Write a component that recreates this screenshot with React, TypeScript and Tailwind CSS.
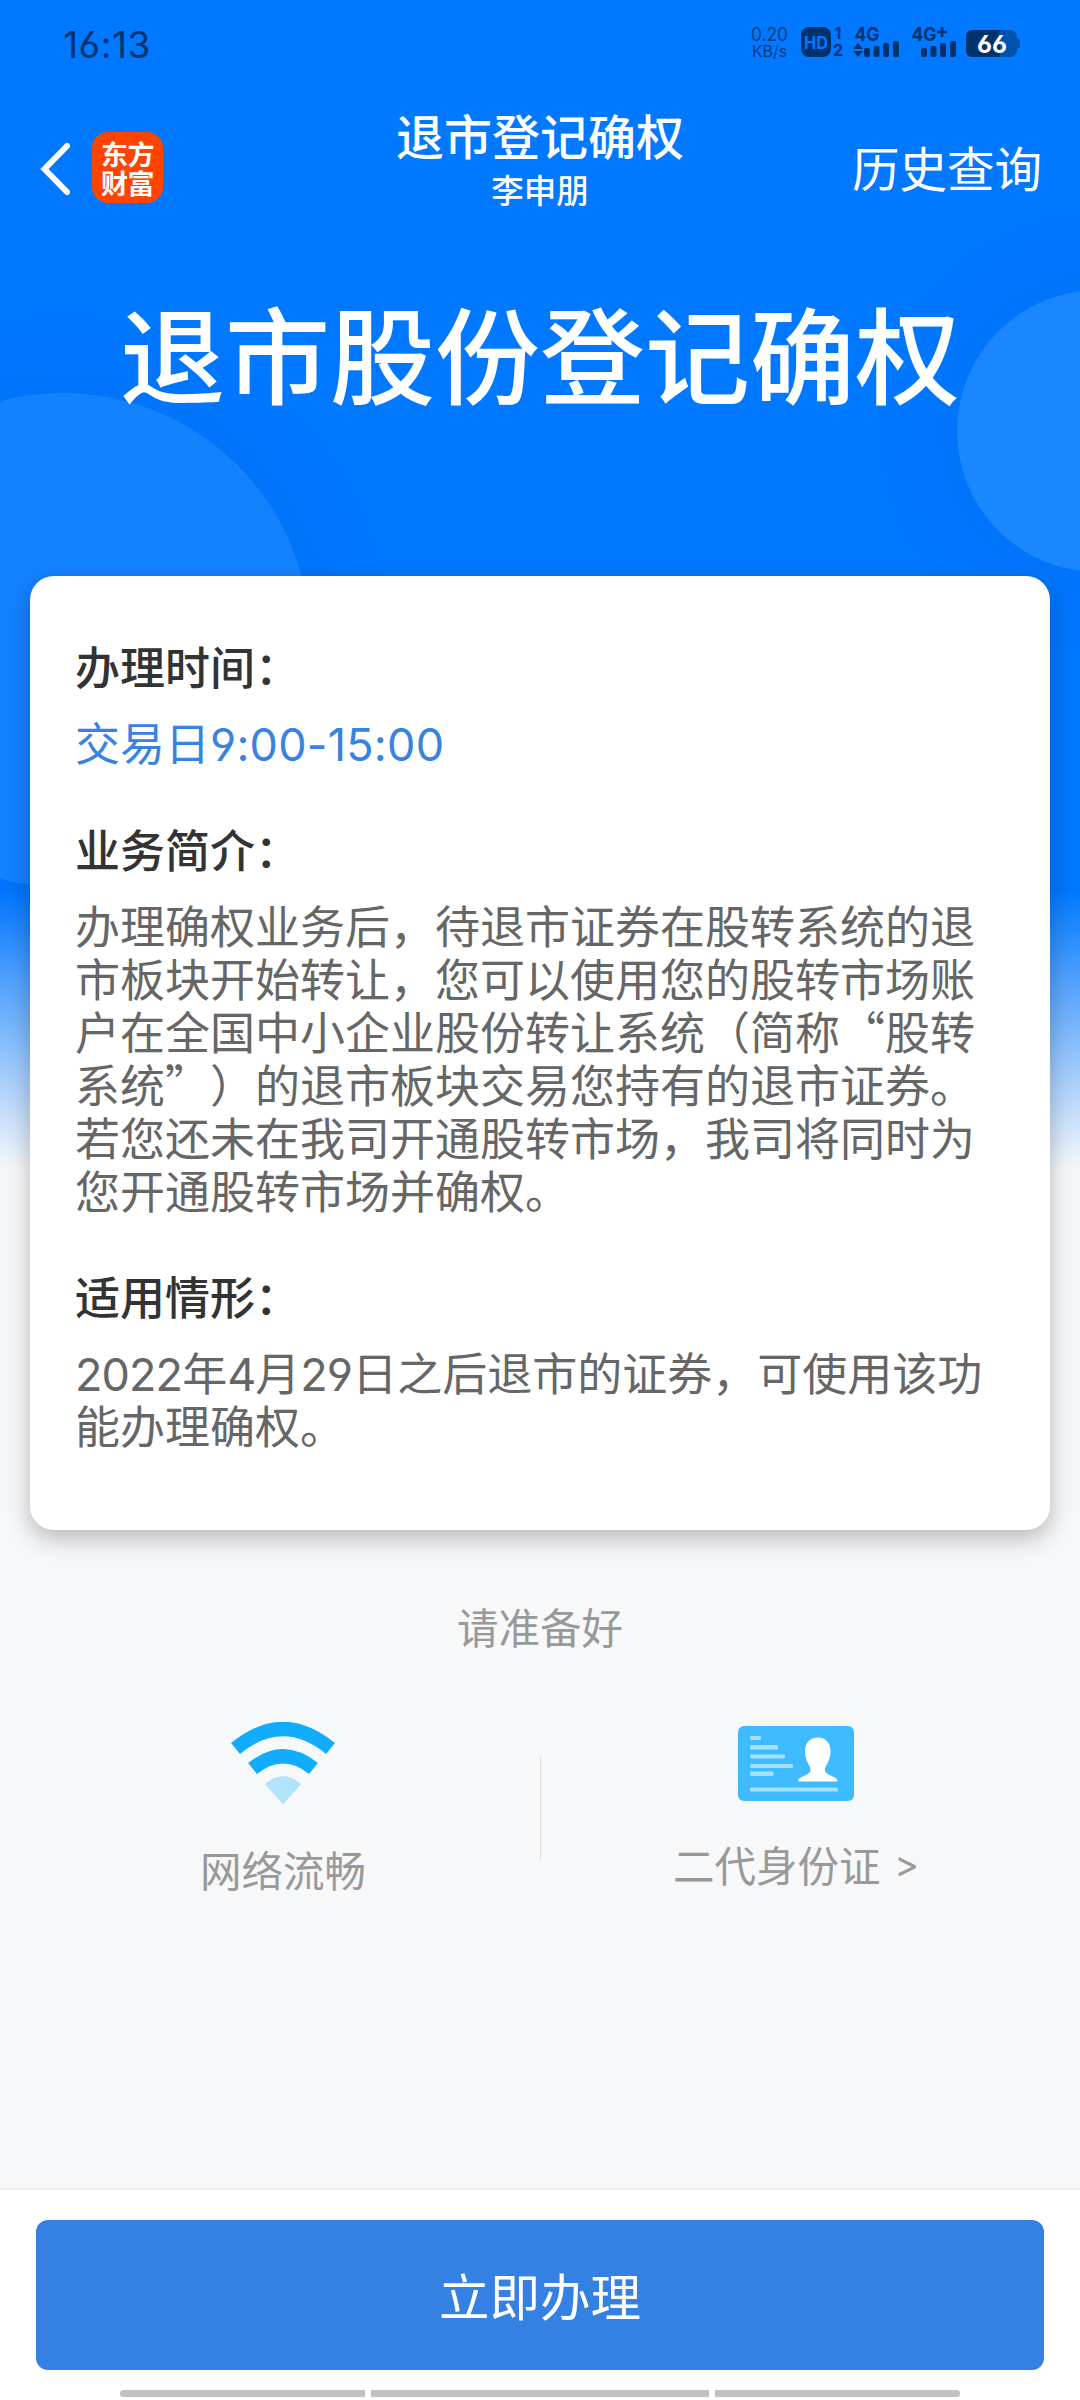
import type { ReactNode } from 'react'

const sections = [
  {
    title: '办理时间：',
    lines: [<>交易日<Num className="tracking-[0.005em]">9:00-15:00</Num></>],
    color: 'text-[#3883e0]',
  },
  {
    title: '业务简介：',
    lines: [
      '办理确权业务后，待退市证券在股转系统的退',
      '市板块开始转让，您可以使用您的股转市场账',
      '户在全国中小企业股份转让系统（简称“股转',
      '系统”）的退市板块交易您持有的退市证券。',
      '若您还未在我司开通股转市场，我司将同时为',
      '您开通股转市场并确权。',
    ],
    color: 'text-[#666]',
  },
  {
    title: '适用情形：',
    lines: [
      <><Num>2022</Num>年<Num>4</Num>月<Num>29</Num>日之后退市的证券，可使用该功</>,
      '能办理确权。',
    ],
    color: 'text-[#666]',
  },
]

function Num({ children, className = 'tracking-[-0.02em]' }: { children: ReactNode; className?: string }) {
  return (
    <span className={`font-['Inter',sans-serif] leading-none [font-feature-settings:'cv03','cv04'] ${className}`}>
      {children}
    </span>
  )
}

function StatusIcons() {
  return (
    <svg width="280" height="40" viewBox="740 22 280 40" fill="#00336e" fontFamily="Inter, sans-serif">
      {/* network speed */}
      <g fontSize="18.5" textAnchor="middle" opacity="0.85">
        <text x="769.5" y="41" textLength="37" lengthAdjust="spacingAndGlyphs">0.20</text>
        <text x="769.5" y="56.5" fontSize="16" textLength="35" lengthAdjust="spacingAndGlyphs">KB/s</text>
      </g>

      {/* HD voice */}
      <rect x="801" y="27" width="30" height="30" rx="8" />
      <text x="816" y="48.5" fontSize="18" fontWeight="700" fill="#0078ff" textAnchor="middle" textLength="24" lengthAdjust="spacingAndGlyphs">HD</text>
      <text x="838" y="38.5" fontSize="16" fontWeight="700" textAnchor="middle">1</text>
      <text x="838" y="56.3" fontSize="16" fontWeight="700" textAnchor="middle">2</text>

      {/* sim 1 */}
      <text x="854.5" y="41" fontSize="19" fontWeight="700" textLength="25" lengthAdjust="spacingAndGlyphs">4G</text>
      <path d="M858 43l5 6h-10zM858 57l-5-6h10z" />
      <rect x="864" y="48" width="6" height="9" rx="2" />
      <rect x="873.5" y="46" width="6" height="11" rx="2" />
      <rect x="883" y="43" width="6" height="14" rx="2" />
      <rect x="893" y="41" width="6" height="16" rx="2" />

      {/* sim 2 */}
      <text x="911.5" y="41" fontSize="19" fontWeight="700" textLength="25" lengthAdjust="spacingAndGlyphs">4G</text>
      <path d="M940.7 27h2.6v3.7h3.7v2.6h-3.7v3.7h-2.6v-3.7h-3.7v-2.6h3.7z" />
      <rect x="921" y="48" width="6" height="9" rx="2" />
      <rect x="930.5" y="46" width="6" height="11" rx="2" />
      <rect x="940" y="43" width="6" height="14" rx="2" />
      <rect x="950" y="41" width="6" height="16" rx="2" />

      {/* battery */}
      <path d="M972 30h38a7 7 0 0 1 7 7v1.500q3 .5 3 2.500v5q0 2-3 2.500v1.500a7 7 0 0 1-7 7h-38a6 6 0 0 1-6-6v-15a6 6 0 0 1 6-6z" fill="#0052b0" />
      <path d="M972 30h28v27h-28a6 6 0 0 1-6-6v-15a6 6 0 0 1 6-6z" fill="#00336e" />
      <text x="992" y="52.800" fontSize="24" fontWeight="700" fill="#fff" textAnchor="middle" textLength="30" lengthAdjust="spacingAndGlyphs" className="[font-feature-settings:'cv03']">66</text>
    </svg>
  )
}

function WifiIcon() {
  return (
    <svg width="104" height="83" viewBox="0 0 104 83" fill="none">
      <path d="M4.500 26.500Q52-12.500 99.500 26.500" stroke="#12acff" strokeWidth="14" />
      <path d="M21.500 46.500Q52 22 82.500 46.500" stroke="#12acff" strokeWidth="14" />
      <path d="M34 62Q52 46.500 70 62L52 82.500z" fill="#b3e3fb" />
    </svg>
  )
}

function IdCardIcon() {
  return (
    <svg width="116" height="75" viewBox="0 0 116 75">
      <rect width="116" height="75" rx="6" fill="#3ebbff" />
      <g fill="#a5e0ff">
        <rect x="12" y="10" width="11" height="4" rx="1" />
        <rect x="12" y="19" width="28" height="4.500" rx="1" />
        <rect x="12" y="28.500" width="35" height="4" rx="1" />
        <rect x="12" y="38" width="43" height="4" rx="1" />
        <rect x="12" y="45.500" width="23.500" height="4.500" rx="1" />
        <rect x="12" y="61.500" width="88" height="4" rx="1" />
      </g>
      <path d="M80 11.500c8 0 12.500 5.500 12.500 13.500 0 8-3 12-5 16-.8 2-.8 4 0 5 3 4 11 4.500 12 8.500q0 1-1 1H61q-1 0-1-1c1-4 9-4.500 12-8.500.8-1 .8-3 0-5-2-4-5-8-5-16 0-8 5-13.500 13-13.500z" fill="#fff" />
    </svg>
  )
}

export default function App() {
  return (
    <div className="relative flex h-[2400px] w-[1080px] flex-col overflow-hidden bg-[#f7f8fa] font-['Noto_Sans_CJK_SC',sans-serif] [text-spacing-trim:space-all]">
      {/* BACKDROP */}
      <div className="absolute inset-x-0 top-0 h-[1170px] overflow-hidden bg-linear-to-b/srgb from-[#0078ff] from-[76%] to-[#f7f8fa] to-100%">
        <div className="absolute left-[-184px] top-[393px] h-[494px] w-[494px] rounded-full bg-[#1482ff] shadow-[0_0_90px_rgba(0,80,200,0.16)]" />
        <div className="absolute left-[957px] top-[290px] h-[282px] w-[282px] rounded-full bg-[#1a86ff] shadow-[0_0_90px_rgba(0,80,200,0.16)]" />
      </div>

      <div className="relative flex flex-1 flex-col">
        {/* STATUS BAR */}
        <div className="flex h-[84px] items-start justify-between pl-[63px] pr-[60px] pt-[22px] text-[#00336e]">
          <span className="font-['Inter',sans-serif] text-[37px] leading-[45px] tracking-[0.015em] [font-feature-settings:'cv03']">16:13</span>
          <StatusIcons />
        </div>

        {/* NAV */}
        <nav className="grid h-[170px] grid-cols-3 text-white">
          <div className="flex items-start gap-[22px] pl-[40px] pt-[48px]">
            <svg className="mt-[10px]" width="30" height="54" viewBox="0 0 30 54" fill="none" stroke="#fff" strokeWidth="6" strokeLinecap="round" strokeLinejoin="miter">
              <path d="M27 4L4.500 27L27 50" />
            </svg>
            <div className="flex h-[71px] w-[71px] flex-col items-center justify-center rounded-[16px] bg-[#ff4400] text-[27px] font-bold leading-[29px] tracking-[-0.02em]">
              <span>东方</span>
              <span>财富</span>
            </div>
          </div>
          <div className="flex flex-col items-center whitespace-nowrap pt-[20px] font-medium">
            <span className="text-[48px] leading-[60px]">退市登记确权</span>
            <span className="mt-[-3px] text-[32.5px] leading-[56px]">李申朋</span>
          </div>
          <div className="flex justify-end pr-[38px] pt-[53px] text-[47.5px] leading-[60px]">历史查询</div>
        </nav>

        <h1 className="h-[322px] pt-[36px] text-center text-[105px] font-medium leading-[120px] text-white">
          退市股份登记确权
        </h1>

        {/* INFO CARD */}
        <div className="mx-[30px] h-[954px] rounded-[24px] bg-white px-[45px] pt-[63px] text-[45px] leading-[53px] shadow-[0_9px_24px_rgba(0,0,0,0.26)]">
          {sections.map(section => (
            <section key={section.title} className="mb-[53.5px]">
              <h2 className="mb-[23px] font-medium text-[#333]">{section.title}</h2>
              {section.lines.map((line, i) => (
                <p key={i} className={`h-[53px] whitespace-nowrap ${section.color}`}>{line}</p>
              ))}
            </section>
          ))}
        </div>

        {/* PREPARATION */}
        <div className="pt-[66px] text-center text-[41.5px] leading-[60px] text-[#999]">
          <div>请准备好</div>
          <div className="flex pt-[66px]">
            <div className="flex flex-1 flex-col items-center pl-[28px] pr-[2px]">
              <WifiIcon />
              <span className="mt-[34px]">网络流畅</span>
            </div>
            <div className="mt-[35px] h-[103px] w-px bg-[#dcdcdc]" />
            <div className="flex flex-1 flex-col items-center pr-[29px] pt-[4px]">
              <IdCardIcon />
              <span className="mt-[33px] flex gap-[14px]">
                二代身份证
                <span className="font-['Inter',sans-serif] text-[37px]">&gt;</span>
              </span>
            </div>
          </div>
        </div>
      </div>

      {/* ACTION BAR */}
      <div className="relative flex h-[212px] flex-col border-t-2 border-[#eee] bg-white px-[36px] pt-[30px]">
        <button className="h-[150px] w-full rounded-[12px] bg-[#3481e3] text-[50.5px] text-white">立即办理</button>
        <div className="mt-[20px] flex h-[7px] justify-center gap-[6px]">
          <div className="w-[245px] rounded-l-full bg-[#c2c2c2]" />
          <div className="w-[338px] bg-[#c2c2c2]" />
          <div className="w-[245px] rounded-r-full bg-[#c2c2c2]" />
        </div>
      </div>
    </div>
  )
}
